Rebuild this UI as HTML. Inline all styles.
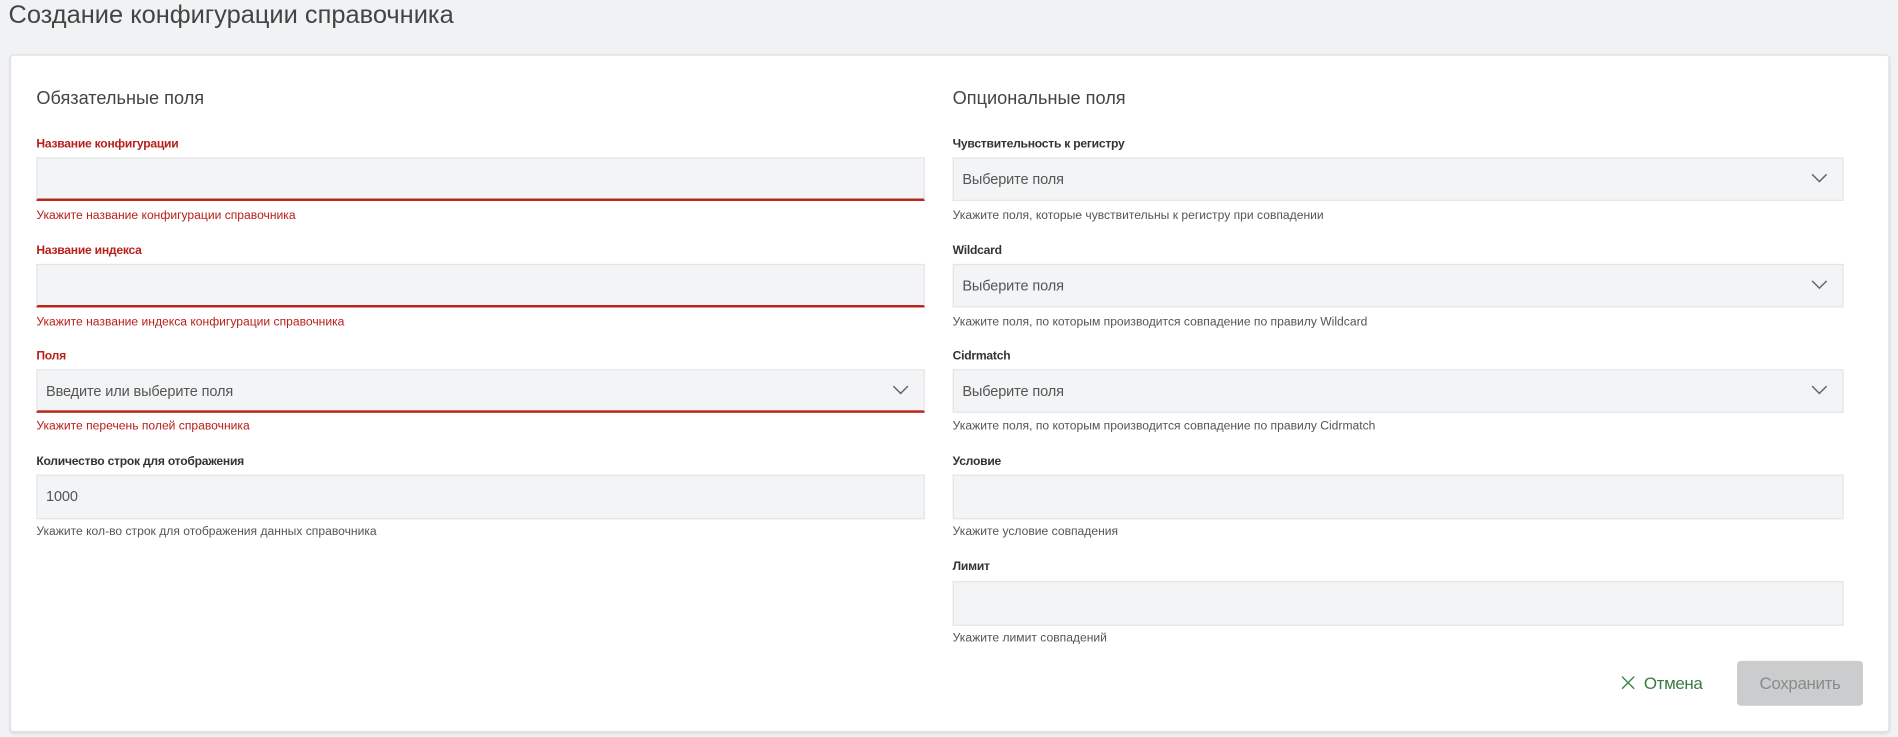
<!DOCTYPE html>
<html><head><meta charset="utf-8"><style>
*{box-sizing:border-box;margin:0;padding:0}
html,body{width:1898px;height:737px;overflow:hidden;background:#f1f2f3}
#w{position:absolute;left:0;top:0;width:1568px;height:609px;transform:scale(1.2105);transform-origin:0 0;font-family:"Liberation Sans",sans-serif;color:#333}
.t{position:absolute;left:7px;top:1px;font-size:21px;color:#444;white-space:nowrap}
.card{position:absolute;left:8px;top:45px;width:1553px;height:560px;background:#fff;border:1px solid #dcdde0;border-radius:3px;box-shadow:0 1px 2px rgba(0,0,0,.08)}
.a{position:absolute;white-space:nowrap}
.h{font-size:15px;color:#444}
.l{font-size:10px;font-weight:bold;color:#333;letter-spacing:-0.2px}
.l.r{color:#b8201a}
.hp{font-size:10px;color:#555}
.hp.r{color:#b8201a}
.in{position:absolute;height:36px;background:#f3f4f5;border:1px solid #e4e5e7;font-size:12px;color:#555;padding:10px 7px;letter-spacing:-0.1px}
.in.r{border-bottom:2px solid #b8201a}
.ch{position:absolute;right:12px;top:12px}
</style></head><body><div id="w">
<div class="t">Создание конфигурации справочника</div>
<div class="card"></div>
<div class="a h" style="left:30px;top:73px">Обязательные поля</div>
<div class="a h" style="left:787px;top:73px">Опциональные поля</div>

<div class="a l r" style="left:30px;top:114px">Название конфигурации</div>
<div class="in r" style="left:30px;top:130px;width:734px"></div>
<div class="a hp r" style="left:30px;top:173px">Укажите название конфигурации справочника</div>
<div class="a l r" style="left:30px;top:202px">Название индекса</div>
<div class="in r" style="left:30px;top:218px;width:734px"></div>
<div class="a hp r" style="left:30px;top:261px">Укажите название индекса конфигурации справочника</div>
<div class="a l r" style="left:30px;top:289px">Поля</div>
<div class="in r" style="left:30px;top:305px;width:734px">Введите или выберите поля<svg class="ch" width="14" height="8" viewBox="0 0 14 8"><path d="M1 1l6 6 6-6" fill="none" stroke="#666" stroke-width="1.2"/></svg></div>
<div class="a hp r" style="left:30px;top:347px">Укажите перечень полей справочника</div>
<div class="a l" style="left:30px;top:376px">Количество строк для отображения</div>
<div class="in" style="left:30px;top:392px;width:734px;height:37px">1000</div>
<div class="a hp" style="left:30px;top:434px">Укажите кол-во строк для отображения данных справочника</div>

<div class="a l" style="left:787px;top:114px">Чувствительность к регистру</div>
<div class="in" style="left:787px;top:130px;width:736px">Выберите поля<svg class="ch" width="14" height="8" viewBox="0 0 14 8"><path d="M1 1l6 6 6-6" fill="none" stroke="#666" stroke-width="1.2"/></svg></div>
<div class="a hp" style="left:787px;top:173px">Укажите поля, которые чувствительны к регистру при совпадении</div>
<div class="a l" style="left:787px;top:202px">Wildcard</div>
<div class="in" style="left:787px;top:218px;width:736px">Выберите поля<svg class="ch" width="14" height="8" viewBox="0 0 14 8"><path d="M1 1l6 6 6-6" fill="none" stroke="#666" stroke-width="1.2"/></svg></div>
<div class="a hp" style="left:787px;top:261px">Укажите поля, по которым производится совпадение по правилу Wildcard</div>
<div class="a l" style="left:787px;top:289px">Cidrmatch</div>
<div class="in" style="left:787px;top:305px;width:736px">Выберите поля<svg class="ch" width="14" height="8" viewBox="0 0 14 8"><path d="M1 1l6 6 6-6" fill="none" stroke="#666" stroke-width="1.2"/></svg></div>
<div class="a hp" style="left:787px;top:347px">Укажите поля, по которым производится совпадение по правилу Cidrmatch</div>
<div class="a l" style="left:787px;top:376px">Условие</div>
<div class="in" style="left:787px;top:392px;width:736px;height:37px"></div>
<div class="a hp" style="left:787px;top:434px">Укажите условие совпадения</div>
<div class="a l" style="left:787px;top:463px">Лимит</div>
<div class="in" style="left:787px;top:480px;width:736px;height:37px"></div>
<div class="a hp" style="left:787px;top:522px">Укажите лимит совпадений</div>

<svg class="a" style="left:1339px;top:558px" width="12" height="12" viewBox="0 0 12 12"><path d="M1 1l10 10M11 1L1 11" stroke="#3a8a4a" stroke-width="1.2"/></svg>
<div class="a" style="left:1358px;top:556px;font-size:14px;color:#3a7a3e;letter-spacing:-0.3px">Отмена</div>
<div class="a" style="left:1435px;top:546px;width:104px;height:37px;background:#cbcccd;border-radius:3px;color:#8a8a8a;font-size:14px;text-align:center;line-height:37px;letter-spacing:-0.3px">Сохранить</div>
</div></body></html>
